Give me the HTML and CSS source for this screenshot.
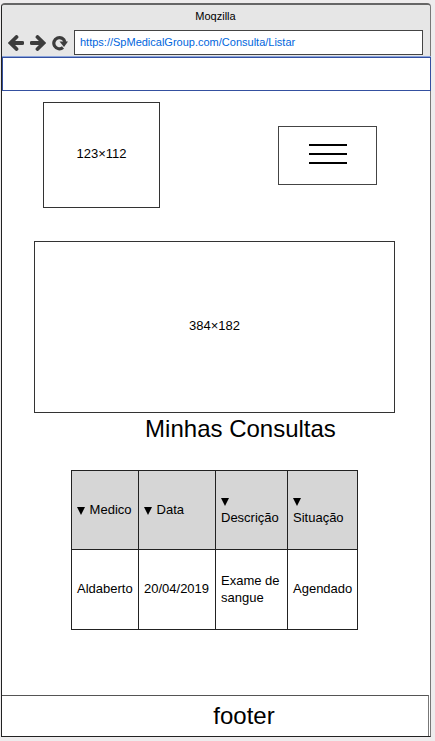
FILE: index.html
```html
<!DOCTYPE html>
<html lang="pt-BR">
<head>
<meta charset="utf-8">
<meta name="viewport" content="width=device-width, initial-scale=1">
<title>Moqzilla</title>
<link rel="stylesheet" href="styles.css">
</head>
<body>
<div class="window">
  <header class="chrome">
    <div class="chrome-title">Moqzilla</div>
    <div class="toolbar">
      <button class="nav-button" type="button" aria-label="Back">
        <svg width="16" height="16" viewBox="0 0 16 16"><path d="M8.500 2 2.500 8l6 6M3 8h11.500" fill="none" stroke="#3c3c3c" stroke-width="3.800" stroke-linecap="round"/></svg>
      </button>
      <button class="nav-button" type="button" aria-label="Forward">
        <svg width="16" height="16" viewBox="0 0 16 16"><path d="M7.500 2l6 6-6 6M13 8H1.500" fill="none" stroke="#3c3c3c" stroke-width="3.800" stroke-linecap="round"/></svg>
      </button>
      <button class="nav-button" type="button" aria-label="Reload">
        <svg width="16" height="16" viewBox="0 0 16 16"><path d="M11 12.500A5.600 5.600 0 1 1 12.900 7" fill="none" stroke="#3c3c3c" stroke-width="3.200"/><path d="M7.500 6.500H16l-4 5.500z" fill="#3c3c3c"/></svg>
      </button>
      <input class="address" type="text" aria-label="Address" value="https://SpMedicalGroup.com/Consulta/Listar">
    </div>
  </header>
  <div class="banner"></div>
  <main class="content">
    <div class="top-row">
      <div class="placeholder logo">123×112</div>
      <button class="menu-button" type="button" aria-label="Menu">
        <svg width="38" height="22" viewBox="0 0 38 22"><path d="M0 2h38M0 11h38M0 20h38" stroke="#000" stroke-width="2"/></svg>
      </button>
    </div>
    <div class="placeholder hero">384×182</div>
    <h1 class="heading">Minhas Consultas</h1>
    <table class="appointments">
      <thead>
        <tr>
          <th class="col-doctor" scope="col"><svg class="sort" width="8" height="8" viewBox="0 0 8 8"><path d="M0 0h8L4 8z"/></svg> Medico</th>
          <th class="col-date" scope="col"><svg class="sort" width="8" height="8" viewBox="0 0 8 8"><path d="M0 0h8L4 8z"/></svg> Data</th>
          <th class="col-text" scope="col"><svg class="sort" width="8" height="8" viewBox="0 0 8 8"><path d="M0 0h8L4 8z"/></svg> Descrição</th>
          <th class="col-status" scope="col"><svg class="sort" width="8" height="8" viewBox="0 0 8 8"><path d="M0 0h8L4 8z"/></svg> Situação</th>
        </tr>
      </thead>
      <tbody>
        <tr><td>Aldaberto</td><td>20/04/2019</td><td>Exame de sangue</td><td>Agendado</td></tr>
      </tbody>
    </table>
  </main>
  <footer class="footer">footer</footer>
</div>
</body>
</html>
```
FILE: styles.css
```css
* {
  box-sizing: border-box;
}

body {
  margin: 0;
  padding: 3px 4px 4px 1px;
  min-height: 100vh;
  display: flex;
  background: #eeeced;
  color: #000;
  font: 13px/17px "Liberation Sans", Arial, sans-serif;
}

.window {
  flex: 1;
  display: flex;
  flex-direction: column;
  background: #fff;
  border: 1px solid #222;
  border-top: 2px solid #666;
  border-right-color: #777;
  border-radius: 4px 4px 0 0;
}

.chrome {
  padding: 3px 7px 2px 6px;
  background: #e6e6e6;
  border-radius: 3px 3px 0 0;
}

.chrome-title {
  font-size: 11px;
  line-height: 16px;
  text-align: center;
  margin-bottom: 6px;
}

.toolbar {
  display: flex;
  align-items: center;
  gap: 6px;
}

.nav-button {
  display: flex;
  padding: 0;
  border: 0;
  background: none;
}

.address {
  flex: 1;
  min-width: 0;
  height: 25px;
  padding: 0 5px 2px;
  border: 1px solid #444;
  background: #fff;
  color: #0066dd;
  font: 11px "Liberation Sans", Arial, sans-serif;
}

.banner {
  height: 34px;
  margin-right: -1px;
  border: 1px solid #3450a0;
  box-shadow: 0 -1px 0 #8aa4dc;
}

.content {
  flex: 1;
  padding: 11px 35px 24px 32px;
}

.top-row {
  display: flex;
  align-items: center;
  justify-content: space-between;
  padding: 0 18px 0 9px;
}

.placeholder {
  display: flex;
  align-items: center;
  justify-content: center;
  padding-bottom: 3px;
  border: 1px solid #333;
}

.logo {
  width: 117px;
  height: 106px;
}

.menu-button {
  display: flex;
  align-items: center;
  justify-content: center;
  width: 99px;
  height: 59px;
  padding: 0 0 2px;
  border: 1px solid #444;
  background: #fff;
}

.hero {
  height: 172px;
  margin-top: 33px;
}

.heading {
  margin: 0 0 26px;
  padding-left: 52px;
  font-size: 24px;
  line-height: 31px;
  font-weight: normal;
  text-align: center;
}

.appointments {
  width: 286px;
  margin: 0 auto;
  border-collapse: collapse;
  table-layout: fixed;
}

.appointments th,
.appointments td {
  height: 80px;
  padding: 0 4px 2px 5px;
  border: 1px solid #222;
  font-weight: normal;
  text-align: left;
  vertical-align: middle;
}

.appointments th {
  height: 79px;
  background: #d6d6d6;
}

.col-doctor {
  width: 67px;
}

.col-date {
  width: 77px;
}

.col-text {
  width: 72px;
}

.col-status {
  width: 70px;
}

.sort {
  margin-right: 1px;
  vertical-align: -1px;
}

.footer {
  margin-right: 1px;
  padding-left: 58px;
  border-top: 1px solid #555;
  border-right: 1px solid #777;
  font-size: 24px;
  line-height: 40px;
  text-align: center;
}
```
